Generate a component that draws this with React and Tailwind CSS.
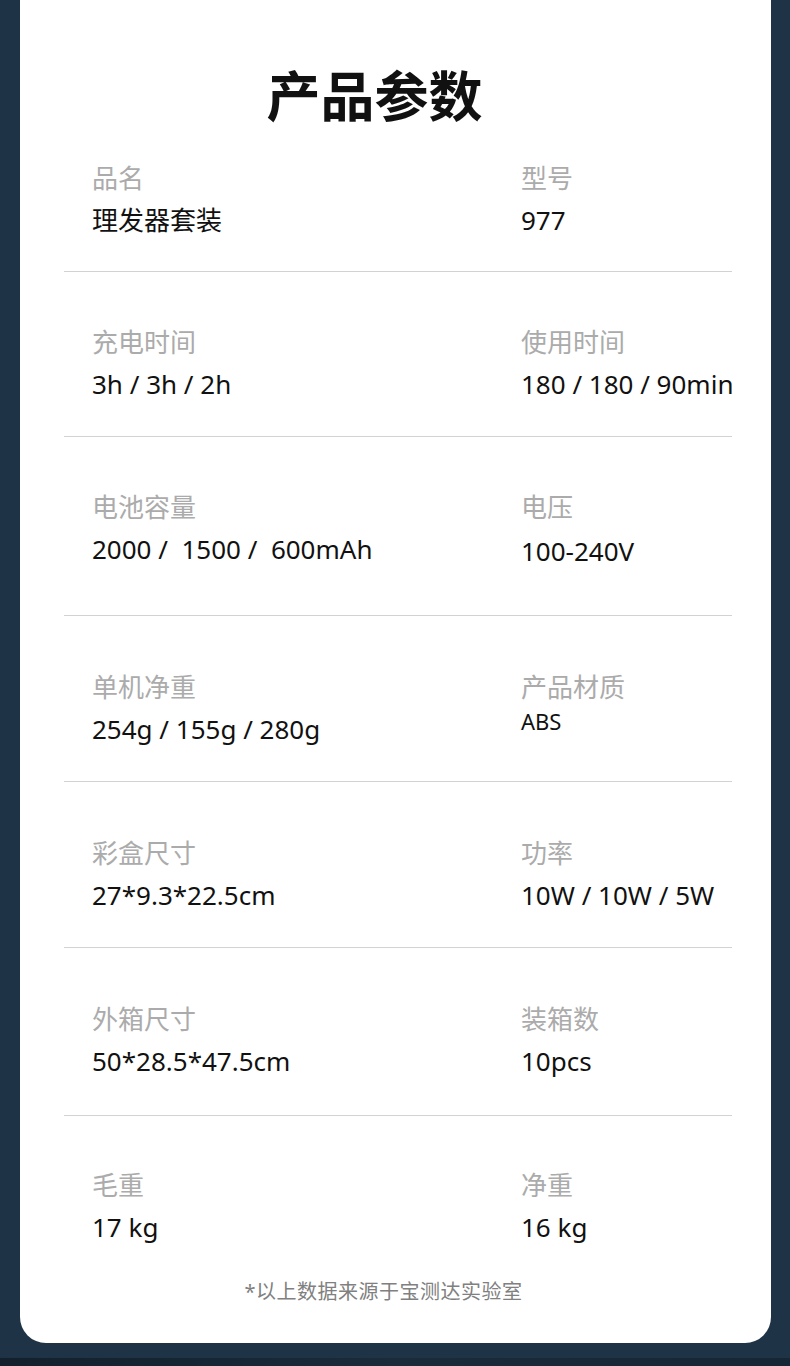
import React from "react";

const specs = [
  { h: "h-[272px]", pt: "pt-[162px]", left: ["品名", "理发器套装"], right: ["型号", "977"] },
  { h: "h-[165px]", pt: "pt-[54px]", left: ["充电时间", "3h / 3h / 2h"], right: ["使用时间", "180 / 180 / 90min"] },
  { h: "h-[179px]", pt: "pt-[54px]", left: ["电池容量", "2000 /  1500 /  600mAh"], right: ["电压", "100-240V"], rightMt: "mt-[12px]" },
  { h: "h-[166px]", pt: "pt-[55px]", left: ["单机净重", "254g / 155g / 280g"], right: ["产品材质", "ABS"], rightSmall: true },
  { h: "h-[166px]", pt: "pt-[55px]", left: ["彩盒尺寸", "27*9.3*22.5cm"], right: ["功率", "10W / 10W / 5W"] },
  { h: "h-[168px]", pt: "pt-[55px]", left: ["外箱尺寸", "50*28.5*47.5cm"], right: ["装箱数", "10pcs"] },
];

const last = { left: ["毛重", "17 kg"], right: ["净重", "16 kg"] };

function Cell({ label, value, small, mt }) {
  return (
    <div className="whitespace-pre">
      <p className="text-[26px] leading-[32px] text-[#ababab]">{label}</p>
      <p
        className={
          small
            ? "mt-[4px] text-[22px] leading-[28px] text-[#111]"
            : `${mt || "mt-[10px]"} text-[26px] leading-[32px] text-[#111]`
        }
      >
        {value}
      </p>
    </div>
  );
}

export default function App() {
  return (
    <div
      className="w-[790px] h-[1366px] bg-[#1f3346] flex flex-col overflow-hidden"
      style={{ fontFamily: '"Noto Sans", "Noto Sans CJK SC", sans-serif' }}
    >
      <div className="ml-[20px] w-[751px] h-[1343px] bg-white rounded-b-[26px] relative">
        <h1
          className="absolute left-0 right-0 top-[59px] text-center pr-[42px] text-[54px] leading-[70px] font-bold text-[#111]"
          style={{ fontFamily: '"Noto Sans CJK SC", sans-serif' }}
        >
          产品参数
        </h1>

        {specs.map((row, i) => (
          <div key={i} className={`ml-[44px] mr-[39px] ${row.h} ${row.pt} border-b border-[#d2d2d2]`}>
            <div className="grid grid-cols-[429px_1fr] pl-[28px]">
              <Cell label={row.left[0]} value={row.left[1]} />
              <Cell label={row.right[0]} value={row.right[1]} small={row.rightSmall} mt={row.rightMt} />
            </div>
          </div>
        ))}

        <div className="ml-[44px] mr-[39px] pt-[53px]">
          <div className="grid grid-cols-[429px_1fr] pl-[28px]">
            <Cell label={last.left[0]} value={last.left[1]} />
            <Cell label={last.right[0]} value={last.right[1]} />
          </div>
        </div>

        <p className="mt-[37px] text-center pr-[24px] text-[20px] leading-[24px] text-[#808080] tracking-[0.5px]">
          *以上数据来源于宝测达实验室
        </p>
      </div>
      <div className="h-[15px]" />
      <div className="flex-1 bg-gradient-to-r from-[#13202c] via-[#1a2b3a] to-[#172634]" />
    </div>
  );
}
